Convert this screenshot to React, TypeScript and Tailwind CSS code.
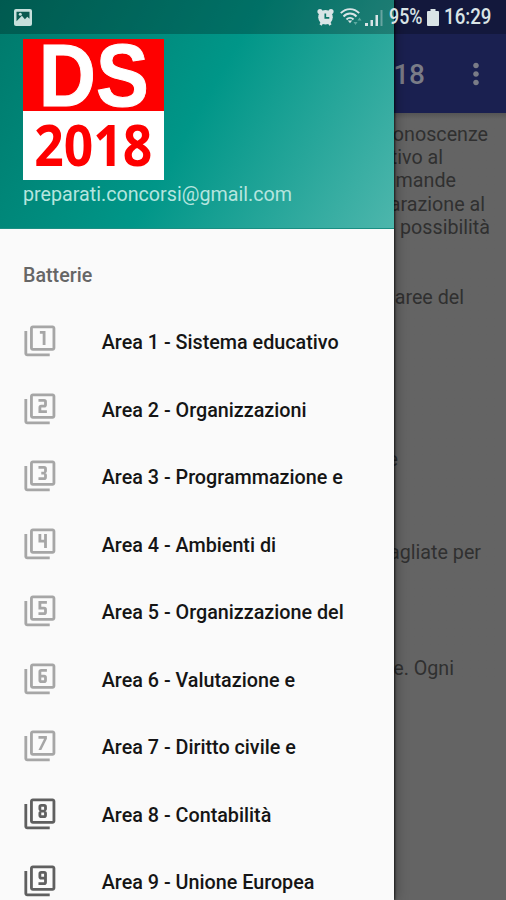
import React from 'react';
import {
  MdFilter1,
  MdFilter2,
  MdFilter3,
  MdFilter4,
  MdFilter5,
  MdFilter6,
  MdFilter7,
  MdFilter8,
  MdFilter9,
  MdMoreVert,
} from 'react-icons/md';

const areas = [
  { icon: MdFilter1, label: 'Area 1 - Sistema educativo' },
  { icon: MdFilter2, label: 'Area 2 - Organizzazioni' },
  { icon: MdFilter3, label: 'Area 3 - Programmazione e' },
  { icon: MdFilter4, label: 'Area 4 - Ambienti di' },
  { icon: MdFilter5, label: 'Area 5 - Organizzazione del' },
  { icon: MdFilter6, label: 'Area 6 - Valutazione e' },
  { icon: MdFilter7, label: 'Area 7 - Diritto civile e' },
  { icon: MdFilter8, label: 'Area 8 - Contabilità', strong: true },
  { icon: MdFilter9, label: 'Area 9 - Unione Europea', strong: true },
];

// line ends of the page text, with the width each line reaches
const lines = [
  { text: 'conoscenze', end: 'w-[488px]' },
  { text: 'tivo al', end: 'w-[443px]' },
  { text: 'mande', end: 'w-[456px]' },
  { text: 'arazione al', end: 'w-[485px]' },
  { text: 'possibilità', end: 'w-[490px]' },
  null,
  null,
  { text: 'aree del', end: 'w-[464px]' },
  null,
  null,
  null,
  null,
  null,
  null,
  { text: 'e', end: 'w-[398px]' },
  null,
  null,
  null,
  { text: 'agliate per', end: 'w-[481px]' },
  null,
  null,
  null,
  null,
  { text: 'e. Ogni', end: 'w-[454px]' },
];

function StatusBar() {
  return (
    <div className="absolute inset-x-0 top-0 z-20 flex h-[34px] items-center bg-black/25 text-[#d9e4e6]">
      <svg className="ml-[14px] h-[17px] w-[18px]" viewBox="0 0 18 17">
        <rect width="18" height="17" rx="2" fill="#c7e0dc" />
        <path d="M2.5 2.8h13v7l-2.2-2-2.4 2.4-3-3.4-5.4 5.4z" fill="#0b5a50" />
        <circle cx="6.3" cy="5.3" r="1.5" fill="#c7e0dc" />
      </svg>
      <div className="ml-auto flex items-center pr-[15px]">
        <svg className="h-[18px] w-[17px]" viewBox="0 0 17 18" fill="none">
          <path d="M3.5 17l2-3M13.5 17l-2-3" stroke="currentColor" strokeWidth="2.6" />
          <circle cx="3" cy="3.6" r="2.6" fill="currentColor" />
          <circle cx="14" cy="3.6" r="2.6" fill="currentColor" />
          <circle cx="8.5" cy="9.3" r="7.3" fill="currentColor" />
          <path d="M8.3 5.5v4.300h4" stroke="#0c7468" strokeWidth="1.7" />
        </svg>
        <svg className="ml-[6px] h-[18px] w-[23px]" viewBox="0 0 23 18" fill="none" stroke="currentColor">
          <path d="M.8 5.200C6-.3 14-.3 19.200 5.200" strokeWidth="1.900" />
          <path d="M3.500 8.500c3.500-4 9.500-4 13 0" strokeWidth="1.900" />
          <path d="M6.500 11.500c2-2.200 5-2.200 7 0" strokeWidth="1.900" />
          <path d="M7.800 12.500h4.400l-2.200 2.700z" fill="currentColor" stroke="none" />
          <g fill="#5fa9a0" stroke="none">
            <path d="M13.500 14h4l-2 3zM17.500 12.500h4l-2-3z" />
          </g>
        </svg>
        <svg className="ml-[2px] h-[17px] w-[18px]" viewBox="0 0 18 17" fill="currentColor">
          <path d="M0 14h3v3H0zM5.500 11H8v6H5.500zM10.500 6H13v11h-2.500z" />
          <path d="M15.500 1h2v16h-2z" opacity=".4" />
        </svg>
        <span className="ml-[6px] w-[35px] origin-left scale-x-[.83] text-[21.5px] leading-none font-medium whitespace-nowrap">95%</span>
        <svg className="ml-[3px] h-[17px] w-[12px]" viewBox="0 0 12 17" fill="currentColor">
          <path d="M3.500 0h5v2H11q1 0 1 1v13q0 1-1 1H1q-1 0-1-1V3q0-1 1-1h2.500z" />
        </svg>
        <span className="ml-[5px] w-[47px] origin-left scale-x-[.87] text-[21.5px] leading-none font-medium whitespace-nowrap">16:29</span>
      </div>
    </div>
  );
}

function Page() {
  return (
    <div className="flex h-full flex-col bg-[#646464]">
      <header className="flex h-[113px] shrink-0 items-center bg-[#1a2050] pt-[36px] text-[#7a7c87]">
        <h1 className="w-[425px] text-right text-[28px] leading-none font-medium">2018</h1>
        <MdMoreVert className="-mt-[2px] ml-[34px] size-[34px]" />
      </header>
      <main className="bg-linear-to-b from-[#555] to-[#646464] to-[6px] pt-[10px] text-[19.7px] leading-[23.22px] text-[#303030]">
        {lines.map((line, i) => (
          <p key={i} className={`h-[23.22px] text-right whitespace-nowrap ${line ? line.end : ''}`}>
            {line?.text}
          </p>
        ))}
      </main>
    </div>
  );
}

function Logo() {
  return (
    <div className="h-[141px] w-[141px] overflow-hidden bg-white text-center">
      <div className="flex h-[72px] items-center justify-center bg-[#fe0000] font-['Liberation_Sans',sans-serif] text-[89px] leading-none font-bold text-white">
        <span className="scale-x-[.89] [-webkit-text-stroke:1px_white]">DS</span>
      </div>
      <div className="flex h-[69px] items-center justify-center font-['Open_Sans',sans-serif] text-[58px] leading-none font-bold text-[#fe0000]">
        <span className="-mt-[4px] scale-x-[.89]">2018</span>
      </div>
    </div>
  );
}

function Drawer() {
  return (
    <aside className="absolute inset-y-0 left-0 z-10 w-[394px] bg-[#fafafa] shadow-[1px_0_2px_rgba(0,0,0,.7),2px_0_12px_rgba(0,0,0,.3)]">
      <div className="h-[229px] border-b border-[#1a8f83] bg-[linear-gradient(120.2deg,#00796b,#009688_50%,#4db6ac)] pt-[39px] pl-[23px]">
        <Logo />
        <p className="mt-[3px] text-[19.7px] leading-[23px] text-[#b5e5df]">preparati.concorsi@gmail.com</p>
      </div>
      <h2 className="pt-[35px] pl-[23px] text-[19.7px] leading-[23px] font-medium text-[#666]">Batterie</h2>
      <ul className="pt-[20.5px]">
        {areas.map(({ icon: Icon, label, strong }) => (
          <li key={label} className="flex h-[67.5px] items-center pl-[23px]">
            <Icon className={`size-[33.75px] ${strong ? 'text-[#5f5f5f]' : 'text-[#a6a6a6]'}`} />
            <span className="ml-[45px] pt-[4px] text-[19.75px] font-medium whitespace-nowrap text-[#151515]">{label}</span>
          </li>
        ))}
      </ul>
    </aside>
  );
}

export default function App() {
  return (
    <div className="relative h-[900px] w-[506px] overflow-hidden font-[Roboto,sans-serif]">
      <Page />
      <Drawer />
      <StatusBar />
    </div>
  );
}
